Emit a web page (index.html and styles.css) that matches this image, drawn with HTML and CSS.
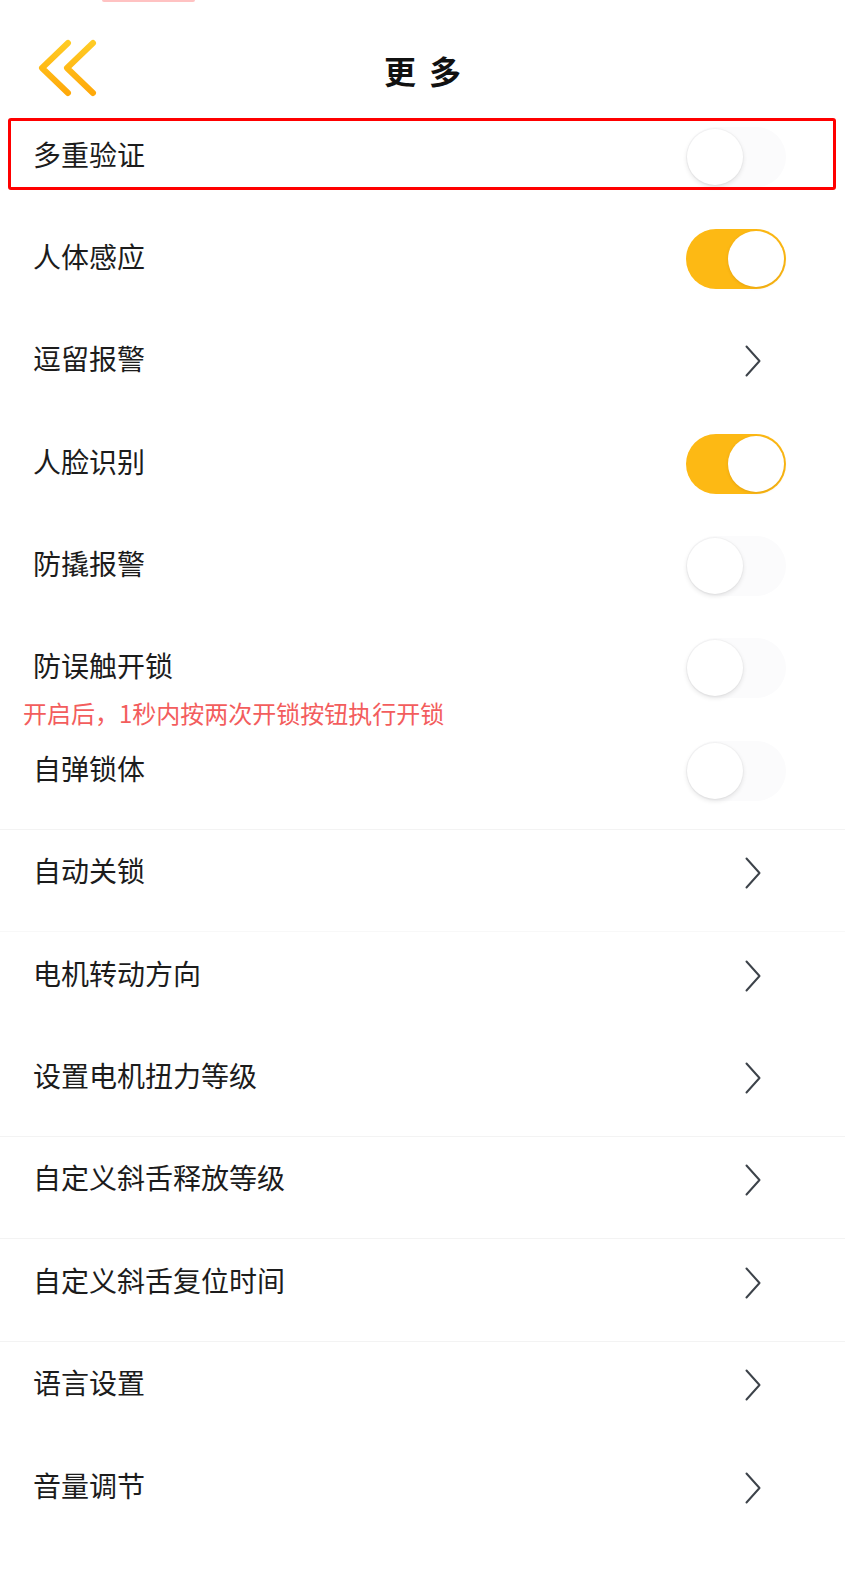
FILE: index.html
```html
<!DOCTYPE html>
<html lang="zh-CN">
<head>
    <meta charset="UTF-8">
    <title>更多</title>
    <meta name="viewport" content="width=device-width, initial-scale=1.0">
    <link rel="stylesheet" href="styles.css">
</head>
<body>
    <div class="top-tab"></div>

    <header class="nav">
        <a class="back" href="#">
            <svg width="60" height="60" viewBox="0 0 60 60">
                <defs>
                    <linearGradient id="backGrad" x1="0" y1="0" x2="0" y2="1">
                        <stop offset="0" stop-color="#ffcb24"/>
                        <stop offset="1" stop-color="#ffa90a"/>
                    </linearGradient>
                </defs>
                <polyline points="30,5 4,30 30,55" fill="none" stroke="url(#backGrad)" stroke-width="6" stroke-linecap="round" stroke-linejoin="round"/>
                <polyline points="55,5 29,30 55,55" fill="none" stroke="url(#backGrad)" stroke-width="6" stroke-linecap="round" stroke-linejoin="round"/>
            </svg>
        </a>
        <h1 class="title">更多</h1>
        <span></span>
    </header>

    <ul class="menu">
        <li class="item">
            <div class="item-main">
                <span class="label">多重验证</span>
                <span class="switch"></span>
            </div>
            <div class="mark"></div>
        </li>
        <li class="item">
            <div class="item-main">
                <span class="label">人体感应</span>
                <span class="switch on"></span>
            </div>
        </li>
        <li class="item">
            <div class="item-main">
                <span class="label">逗留报警</span>
                <span class="arrow"><svg width="16" height="32" viewBox="0 0 16 32"><polyline points="1.5,1.5 14.5,16 1.5,30.5"/></svg></span>
            </div>
        </li>
        <li class="item">
            <div class="item-main">
                <span class="label">人脸识别</span>
                <span class="switch on"></span>
            </div>
        </li>
        <li class="item">
            <div class="item-main">
                <span class="label">防撬报警</span>
                <span class="switch"></span>
            </div>
        </li>
        <li class="item">
            <div class="item-main">
                <span class="label">防误触开锁</span>
                <span class="switch"></span>
            </div>
            <p class="hint">开启后，1秒内按两次开锁按钮执行开锁</p>
        </li>
        <li class="item line">
            <div class="item-main">
                <span class="label">自弹锁体</span>
                <span class="switch"></span>
            </div>
        </li>
        <li class="item line faint">
            <div class="item-main">
                <span class="label">自动关锁</span>
                <span class="arrow"><svg width="16" height="32" viewBox="0 0 16 32"><polyline points="1.5,1.5 14.5,16 1.5,30.5"/></svg></span>
            </div>
        </li>
        <li class="item">
            <div class="item-main">
                <span class="label">电机转动方向</span>
                <span class="arrow"><svg width="16" height="32" viewBox="0 0 16 32"><polyline points="1.5,1.5 14.5,16 1.5,30.5"/></svg></span>
            </div>
        </li>
        <li class="item line">
            <div class="item-main">
                <span class="label">设置电机扭力等级</span>
                <span class="arrow"><svg width="16" height="32" viewBox="0 0 16 32"><polyline points="1.5,1.5 14.5,16 1.5,30.5"/></svg></span>
            </div>
        </li>
        <li class="item line">
            <div class="item-main">
                <span class="label">自定义斜舌释放等级</span>
                <span class="arrow"><svg width="16" height="32" viewBox="0 0 16 32"><polyline points="1.5,1.5 14.5,16 1.5,30.5"/></svg></span>
            </div>
        </li>
        <li class="item line">
            <div class="item-main">
                <span class="label">自定义斜舌复位时间</span>
                <span class="arrow"><svg width="16" height="32" viewBox="0 0 16 32"><polyline points="1.5,1.5 14.5,16 1.5,30.5"/></svg></span>
            </div>
        </li>
        <li class="item">
            <div class="item-main">
                <span class="label">语言设置</span>
                <span class="arrow"><svg width="16" height="32" viewBox="0 0 16 32"><polyline points="1.5,1.5 14.5,16 1.5,30.5"/></svg></span>
            </div>
        </li>
        <li class="item">
            <div class="item-main">
                <span class="label">音量调节</span>
                <span class="arrow"><svg width="16" height="32" viewBox="0 0 16 32"><polyline points="1.5,1.5 14.5,16 1.5,30.5"/></svg></span>
            </div>
        </li>
    </ul>
</body>
</html>
```

FILE: styles.css
```css
body {
    font-family: "Noto Sans CJK SC", "Noto Sans", sans-serif;
    background: #fff;
    color: #1c1c1c;
    margin: 0;
    padding: 0;
    position: relative;
}
.top-tab {
    position: absolute;
    top: 0;
    left: 102px;
    width: 93px;
    height: 2px;
    background: #ffc2c2;
    border-radius: 0 0 3px 3px;
}
.nav {
    height: 113px;
    box-sizing: border-box;
    padding: 27px 0 0 38px;
    display: grid;
    grid-template-columns: 1fr auto 1fr;
    align-items: center;
}
.back {
    display: block;
    width: 60px;
    height: 60px;
    margin-top: -5px;
}
.back svg {
    display: block;
}
.title {
    margin: 0;
    font-size: 32px;
    font-weight: bold;
    color: #111;
    letter-spacing: 13px;
    padding-left: 13px;
    line-height: 84px;
    margin-left: -38px;
}
.menu {
    list-style: none;
    margin: 0;
    padding: 0;
}
.item {
    position: relative;
    height: 102.4px;
    box-sizing: border-box;
}
.item.line {
    border-bottom: 1px solid #f3f3f3;
}
.item.faint {
    border-bottom-color: #f8f8f8;
}
.item-main {
    height: 81px;
    display: flex;
    align-items: center;
    justify-content: space-between;
    padding: 0 59px 0 33px;
}
.label {
    font-size: 28px;
    line-height: 40px;
}
.switch {
    position: relative;
    width: 100px;
    height: 60px;
    margin-top: 6px;
    border-radius: 30px;
    background: #fbfbfc;
}
.switch::after {
    content: "";
    position: absolute;
    top: 2px;
    left: 1px;
    width: 56px;
    height: 56px;
    border-radius: 50%;
    background: #fff;
    box-shadow: 0 2px 5px rgba(0,0,0,0.11), 0 0 0 1px rgba(0,0,0,0.025);
}
.switch.on {
    background: #fdb914;
}
.switch.on::after {
    left: 42px;
    box-shadow: 0 1px 3px rgba(160,100,0,0.25);
}
.arrow {
    width: 100px;
    height: 60px;
    margin-top: 6px;
    display: flex;
    align-items: center;
    justify-content: flex-end;
    padding-right: 25px;
    box-sizing: border-box;
}
.arrow svg {
    display: block;
}
.arrow polyline {
    fill: none;
    stroke: #3d434a;
    stroke-width: 2;
    stroke-linecap: round;
    stroke-linejoin: round;
}
.hint {
    margin: -3px 0 0;
    padding-left: 23px;
    font-size: 24px;
    line-height: 20px;
    color: #f35d5d;
    white-space: nowrap;
}
.mark {
    position: absolute;
    top: 5px;
    left: 8px;
    right: 9px;
    height: 72px;
    box-sizing: border-box;
    border: 3px solid #ff0000;
    border-radius: 3px;
}
```
